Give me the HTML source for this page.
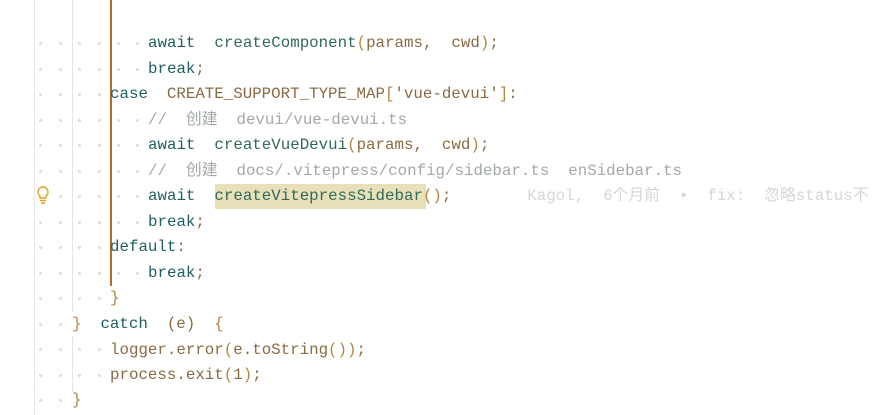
<!DOCTYPE html>
<html><head><meta charset="utf-8"><style>
body{margin:0;width:896px;height:415px;background:#fff;overflow:hidden;position:relative;font-family:"Liberation Mono","Noto Sans CJK SC",monospace;font-size:15.8px}
.l{position:absolute;height:25.5px;line-height:25.5px;white-space:pre}
.d{position:absolute;width:3px;height:3px;border-radius:50%;background:#dcdcdc}
.v{position:absolute;width:1px;background:#e6e6e6}
.k{color:#1f5f5f}.f{color:#2f6b5a}.p{color:#8a6a42}.c{color:#a3a8a8}.o{color:#b08840}
</style></head><body>
<div class="v" style="left:34px;top:0;height:415px"></div>
<div class="v" style="left:72px;top:0;height:312px"></div>
<div class="v" style="left:72px;top:337px;height:54px"></div>
<div style="position:absolute;left:110px;top:0;width:2px;height:286px;background:#b8692a"></div>
<div style="position:absolute;left:215px;top:184px;width:211px;height:25px;background:#e8e0b8"></div>
<svg style="position:absolute;left:35px;top:185px" width="16" height="20" viewBox="0 0 16 20"><path d="M8 2a5 5 0 0 0-3 9v2h6v-2a5 5 0 0 0-3-9z" fill="none" stroke="#e0a020" stroke-width="1.4"/><path d="M5 15.5h6M6 18h4" stroke="#e0a020" stroke-width="1.4"/></svg>
<div id="dots"></div>
<div class="l" style="left:148px;top:31px"><span class="k">await</span>  <span class="f">createComponent</span><span class="o">(</span><span class="p">params,  cwd</span><span class="o">)</span><span class="p">;</span></div>
<div class="l" style="left:148px;top:57px"><span class="k">break</span><span class="p">;</span></div>
<div class="l" style="left:110px;top:82px"><span class="k">case</span>  <span class="p">CREATE_SUPPORT_TYPE_MAP</span><span class="o">[</span><span class="p">'vue-devui'</span><span class="o">]</span><span class="p">:</span></div>
<div class="l c" style="left:148px;top:108px">//  创建  devui/vue-devui.ts</div>
<div class="l" style="left:148px;top:133px"><span class="k">await</span>  <span class="f">createVueDevui</span><span class="o">(</span><span class="p">params,  cwd</span><span class="o">)</span><span class="p">;</span></div>
<div class="l c" style="left:148px;top:159px">//  创建  docs/.vitepress/config/sidebar.ts  enSidebar.ts</div>
<div class="l" style="left:148px;top:184px"><span class="k">await</span>  <span class="f">createVitepressSidebar</span><span class="o">()</span><span class="p">;</span>        <span style="color:#d6d6d6">Kagol,  6个月前  •  fix:  忽略status不</span></div>
<div class="l" style="left:148px;top:210px"><span class="k">break</span><span class="p">;</span></div>
<div class="l" style="left:110px;top:235px"><span class="k">default</span><span class="p">:</span></div>
<div class="l" style="left:148px;top:261px"><span class="k">break</span><span class="p">;</span></div>
<div class="l o" style="left:110px;top:286px">}</div>
<div class="l" style="left:72px;top:312px"><span class="o">}</span>  <span class="k">catch</span>  <span class="p">(e)</span>  <span class="o">{</span></div>
<div class="l" style="left:110px;top:338px"><span class="p">logger.error</span><span class="o">(</span><span class="p">e.toString</span><span class="o">())</span><span class="p">;</span></div>
<div class="l" style="left:110px;top:363px"><span class="p">process.exit</span><span class="o">(</span><span class="p">1</span><span class="o">)</span><span class="p">;</span></div>
<div class="l o" style="left:72px;top:388px">}</div>
<script>
var xs=[40,60,79,99,118,137];
var rows=[[1,148],[2,148],[3,110],[4,148],[5,148],[6,148],[7,148],[8,148],[9,110],[10,148],[11,110],[12,72],[13,110],[14,110],[15,72]];
var h='';
rows.forEach(function(r){var cy=43+(r[0]-1)*25.5;xs.forEach(function(x){if(x<r[1]-5 && !(r[0]==7&&x==40))h+='<div class="d" style="left:'+(x-1)+'px;top:'+(cy-1)+'px"></div>';});});
document.getElementById('dots').innerHTML=h;
</script>
</body></html>
